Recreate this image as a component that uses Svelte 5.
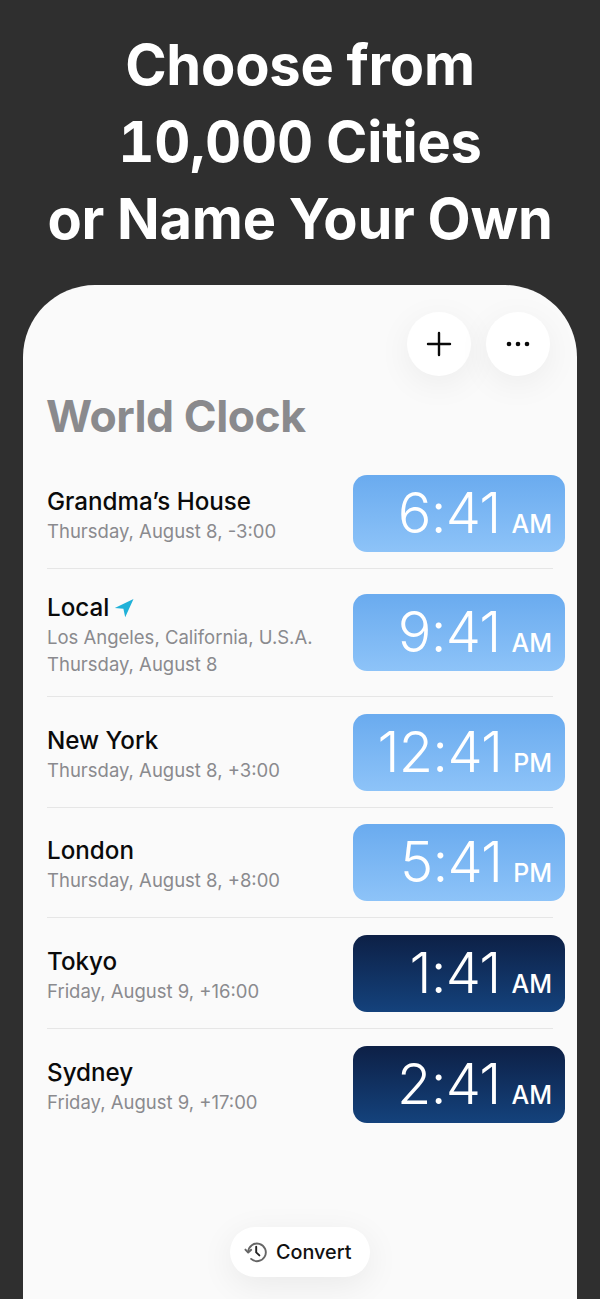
<script lang="ts">
    interface City {
        name: string;
        lines: string[];
        time: string;
        period: string;
        night?: boolean;
        local?: boolean;
    }

    const cities: City[] = [
        { name: "Grandma’s House", lines: ["Thursday, August 8, -3:00"], time: "6:41", period: "AM" },
        {
            name: "Local",
            lines: ["Los Angeles, California, U.S.A.", "Thursday, August 8"],
            time: "9:41",
            period: "AM",
            local: true,
        },
        { name: "New York", lines: ["Thursday, August 8, +3:00"], time: "12:41", period: "PM" },
        { name: "London", lines: ["Thursday, August 8, +8:00"], time: "5:41", period: "PM" },
        { name: "Tokyo", lines: ["Friday, August 9, +16:00"], time: "1:41", period: "AM", night: true },
        { name: "Sydney", lines: ["Friday, August 9, +17:00"], time: "2:41", period: "AM", night: true },
    ];
</script>

<div class="page">
    <h1>Choose from<br />10,000 Cities<br />or Name Your Own</h1>

    <main class="sheet">
        <div class="actions">
            <button class="round" aria-label="Add">
                <svg viewBox="0 0 28 28" width="28" height="28" fill="none" stroke="#0a0a0a" stroke-width="2.4" stroke-linecap="round">
                    <path d="M14 3v22M3 14h22" />
                </svg>
            </button>
            <button class="round" aria-label="More">
                <svg viewBox="0 0 28 28" width="28" height="28" fill="#0a0a0a">
                    <circle cx="5" cy="14" r="2.3" />
                    <circle cx="14" cy="14" r="2.3" />
                    <circle cx="23" cy="14" r="2.3" />
                </svg>
            </button>
        </div>

        <h2>World Clock</h2>

        <ul class="list">
            {#each cities as city}
                <li class="row">
                    <div class="info">
                        <div class="name">
                            {city.name}
                            {#if city.local}
                                <svg viewBox="0 0 20 20" width="20" height="20" fill="#1fb1d8">
                                    <path d="M19.5 1 0.8 10l8.6 0.8 1.8 8.4z" />
                                </svg>
                            {/if}
                        </div>
                        {#each city.lines as line}
                            <div class="sub">{line}</div>
                        {/each}
                    </div>
                    <div class="clock" class:night={city.night}>
                        <span class="time">{city.time}</span>
                        <span class="period">{city.period}</span>
                    </div>
                </li>
            {/each}
        </ul>

        <button class="convert">
            <svg viewBox="0 0 24 24" width="24" height="24" fill="none" stroke="#555" stroke-width="1.9" stroke-linecap="round" stroke-linejoin="round">
                <path d="M4.2 12a8.8 8.8 0 1 1 2.9 6.9" stroke="#666" />
                <path d="M1.4 9.6 4.2 12.6 7.2 9.8" stroke="#666" />
                <path d="M12.2 6.8v5.6l3.2 3" stroke="#222" />
            </svg>
            Convert
        </button>
    </main>
</div>

<style>
    :global(body) {
        margin: 0;
        background: #2f2f2f;
    }

    .page {
        height: 1299px;
        overflow: hidden;
        display: flex;
        flex-direction: column;
        background: #2f2f2f;
        font-family: Inter, "Liberation Sans", sans-serif;
    }

    h1 {
        margin: 0;
        padding-top: 27px;
        height: 285px;
        box-sizing: border-box;
        text-align: center;
        color: #fff;
        font-size: 56px;
        line-height: 77px;
        font-weight: 700;
        letter-spacing: -0.2px;
        word-spacing: -2px;
        font-variant-numeric: tabular-nums;
    }

    .sheet {
        position: relative;
        flex: 1;
        margin: 0 23px;
        background: #fafafa;
        border-radius: 72px 72px 0 0;
        padding: 27px 24px 0;
    }

    .actions {
        display: flex;
        justify-content: flex-end;
        gap: 15px;
        margin-right: 3px;
    }

    .round {
        width: 64px;
        height: 64px;
        border: none;
        border-radius: 50%;
        background: #fff;
        display: flex;
        align-items: center;
        justify-content: center;
        padding: 0;
        box-shadow: 0 8px 34px rgb(0 0 0 / 0.06);
    }

    h2 {
        margin: 14px 0 0 -1px;
        font-size: 44.5px;
        line-height: 52px;
        font-weight: 700;
        letter-spacing: -0.5px;
        color: #8a8a8d;
    }

    .list {
        list-style: none;
        margin: 16px 0 0;
        padding: 0;
    }

    .row {
        display: flex;
        align-items: center;
        justify-content: space-between;
        min-height: 110px;
        border-bottom: 1px solid #e6e6e6;
    }

    .row:nth-child(2) {
        min-height: 127px;
    }

    .row:nth-child(4) {
        min-height: 109px;
    }

    .row:last-child {
        border-bottom: none;
    }

    .info {
        padding-top: 3px;
    }

    .name {
        display: flex;
        align-items: center;
        gap: 5px;
        font-size: 24.2px;
        line-height: 30px;
        font-weight: 500;
        color: #0a0a0a;
    }

    .sub {
        margin-top: 2px;
        font-size: 18.5px;
        line-height: 24px;
        color: #8a8a8e;
    }

    .sub + .sub {
        margin-top: 3px;
    }

    .clock {
        width: 212px;
        height: 77px;
        margin-right: -12px;
        box-sizing: border-box;
        border-radius: 14px;
        padding-right: 13px;
        display: flex;
        align-items: baseline;
        justify-content: flex-end;
        gap: 11px;
        color: #fff;
        background: linear-gradient(#6aabef, #8dc3f8);
    }

    .clock.night {
        background: linear-gradient(#0d2046, #14427c);
    }

    .time {
        font-size: 56px;
        line-height: 77px;
        font-weight: 300;
        letter-spacing: -0.8px;
    }

    .period {
        font-size: 25px;
        font-weight: 500;
    }

    .convert {
        position: absolute;
        left: 207px;
        bottom: 22px;
        width: 140px;
        height: 50px;
        border: none;
        border-radius: 25px;
        background: #fff;
        display: flex;
        align-items: center;
        gap: 8px;
        padding: 0 0 0 14px;
        font-family: inherit;
        font-size: 19.8px;
        font-weight: 500;
        color: #111;
        box-shadow: 0 8px 34px rgb(0 0 0 / 0.07);
    }
</style>
